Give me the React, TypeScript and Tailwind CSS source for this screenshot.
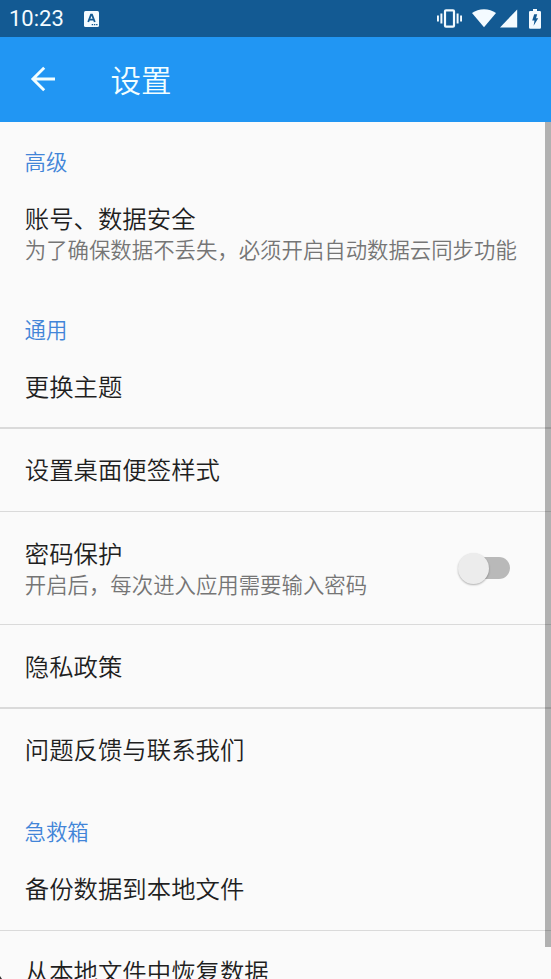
import { useState } from "react";
import clsx from "clsx";

type Item = {
  title: string;
  summary?: string;
  hasSwitch?: boolean;
  className: string;
};

type Section = {
  heading: string;
  items: Item[];
};

const SECTIONS: Section[] = [
  {
    heading: "高级",
    items: [
      {
        title: "账号、数据安全",
        summary: "为了确保数据不丢失，必须开启自动数据云同步功能",
        className: "h-[113px] pt-[23px]",
      },
    ],
  },
  {
    heading: "通用",
    items: [
      { title: "更换主题", className: "h-[84px] border-b-2 pt-[23px]" },
      { title: "设置桌面便签样式", className: "h-[83px] border-b pt-[22px]" },
      {
        title: "密码保护",
        summary: "开启后，每次进入应用需要输入密码",
        hasSwitch: true,
        className: "h-[113px] border-b pt-[23px]",
      },
      { title: "隐私政策", className: "h-[84px] border-b-2 pt-[23px]" },
      { title: "问题反馈与联系我们", className: "h-[83px] pt-[22px]" },
    ],
  },
  {
    heading: "急救箱",
    items: [
      { title: "备份数据到本地文件", className: "h-[84px] border-b pt-[23px]" },
      { title: "从本地文件中恢复数据", className: "h-[84px] pt-[22px]" },
    ],
  },
];

function StatusBar() {
  return (
    <div className="flex h-[37px] shrink-0 items-center bg-[#135a93] pr-[10px] pl-[9px] text-[#f4fbff]">
      <span className="w-[56px] font-[Roboto] text-[22px] leading-[37px] font-normal">10:23</span>
      <svg width="15" height="16" viewBox="0 0 15 16" className="ml-[19px]">
        <rect width="15" height="16" rx="1.5" fill="currentColor" />
        <path d="M4.2 11 7 3.6h1L10.8 11M5.3 8.7h4.4" fill="none" stroke="#135a93" strokeWidth="1.8" />
        <path d="M7.7 13h1.4v1.3H7.7zM9.9 13h1.4v1.3H9.9zM12.1 13h1.4v1.3h-1.4z" fill="#135a93" />
      </svg>
      <div className="ml-auto flex items-center">
        {/* Vibrate */}
        <svg width="25" height="19" viewBox="0 0 25 19" fill="currentColor">
          <path d="M0 6.500h1.900v6H0zM3.400 4.500h2v10h-2zM19.600 4.500h2v10h-2zM23.100 6.500H25v6h-1.900z" />
          <rect x="8" y="1.300" width="9" height="16.400" rx="1" fill="none" stroke="currentColor" strokeWidth="2.200" />
        </svg>
        {/* Wifi */}
        <svg width="24" height="19" viewBox="0 0 24 19" className="ml-[10px]" fill="currentColor">
          <path d="M0 4C3.400 1.500 7.400.2 12 .2S20.600 1.500 24 4L12 18.200z" />
        </svg>
        {/* Signal */}
        <svg width="18" height="19" viewBox="0 0 18 19" className="ml-[4px]" fill="currentColor">
          <path d="M17.200.6v17.800H0z" />
        </svg>
        {/* Battery */}
        <svg width="12" height="20" viewBox="0 0 12 20" className="ml-[11px]" fill="currentColor">
          <path d="M4 0h4v2h2.800Q12 2 12 3.200v15.300Q12 19.700 10.800 19.700H1.200Q0 19.700 0 18.500V3.200Q0 2 1.200 2H4z" />
          <path d="M5.200 5.300h3L7 9.300h2.200L4.600 16.700l.9-5.200H3.200z" fill="#135a93" />
        </svg>
      </div>
    </div>
  );
}

function AppBar() {
  return (
    <header className="flex h-[85px] shrink-0 items-center bg-[#2196f3] pb-px pl-[30px] text-[#f2feff]">
      <button aria-label="返回">
        <svg width="26" height="26" viewBox="0 0 26 26" fill="none" stroke="currentColor" strokeWidth="2.900">
          <path d="M25 13H3M14.200 1.700 2.900 13l11.300 11.300" />
        </svg>
      </button>
      <h1 className="-mt-px ml-[54.5px] text-[30.5px] leading-[44px] font-[350]">设置</h1>
    </header>
  );
}

function Switch() {
  const [on, setOn] = useState(false);

  return (
    <button
      role="switch"
      aria-checked={on}
      onClick={() => setOn(!on)}
      className="flex h-[32px] w-[52px] items-center"
    >
      <span className="ml-[8px] flex h-[22px] w-[44px] items-center rounded-full bg-[#b9b9b9]">
        <span
          className={clsx(
            "h-[31px] w-[31px] shrink-0 rounded-full bg-[#ececec] shadow-[0_1px_2px_rgba(0,0,0,0.3)]",
            on ? "ml-[13px]" : "-ml-[8px]",
          )}
        />
      </span>
    </button>
  );
}

function SettingRow({ item }: { item: Item }) {
  return (
    <div className={clsx("flex shrink-0 items-start border-[#dadada] pl-[24.8px]", item.className)}>
      <div className="flex-1 whitespace-nowrap">
        <p className="text-[24.4px] leading-[36px] text-[#1f1f1f]">{item.title}</p>
        {item.summary && (
          <p className="-mt-[2px] text-[21.4px] leading-[30px] text-[#757575]">{item.summary}</p>
        )}
      </div>
      {item.hasSwitch && (
        <div className="pt-[17px] pr-[41px]">
          <Switch />
        </div>
      )}
    </div>
  );
}

export default function App() {
  return (
    <div className="relative flex h-[979px] w-[551px] flex-col overflow-hidden bg-[#fafafa] font-['Noto_Sans_CJK_SC',sans-serif] font-[350]">
      <StatusBar />
      <AppBar />
      <main className="flex min-h-0 flex-1 flex-col overflow-hidden">
        {SECTIONS.map((section) => (
          <section key={section.heading} className="shrink-0">
            <h2 className="h-[55px] pt-[24px] pl-[24.5px] text-[21.4px] leading-[30px] text-[#4285d8]">
              {section.heading}
            </h2>
            {section.items.map((item) => (
              <SettingRow key={item.title} item={item} />
            ))}
          </section>
        ))}
      </main>
      {/* Scrollbar thumb */}
      <div className="absolute top-[122px] right-0 h-[825px] w-[6px] bg-black/29" />
      {/* Screen corner */}
      <svg className="absolute bottom-0 left-0" width="2" height="3" viewBox="0 0 2 3" fill="#333">
        <path d="M0 0 2 3H0z" />
      </svg>
    </div>
  );
}
